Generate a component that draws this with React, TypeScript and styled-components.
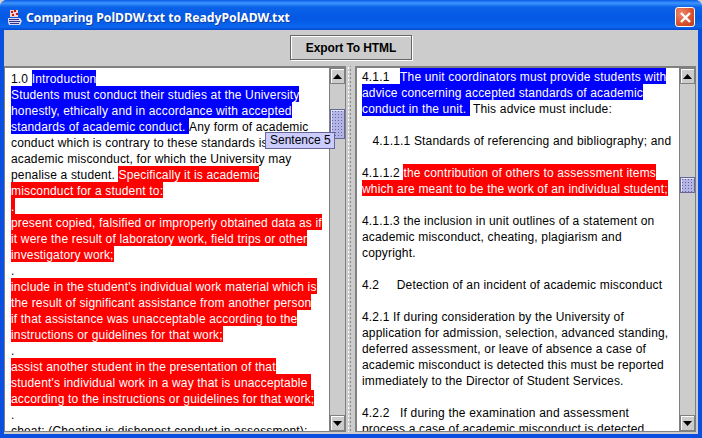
import React, { FC } from 'react'
import styled, { createGlobalStyle } from 'styled-components'

const GlobalStyle = createGlobalStyle`
  html, body {
    margin: 0;
    padding: 0;
    background: #cfcfcf;
  }
`

const Frame = styled.div`
  position: relative;
  width: 702px;
  height: 438px;
  display: flex;
  flex-direction: column;
  overflow: hidden;
  background: #0a4fe0;
  border-radius: 7px 7px 0 0;
`

const TitleBar = styled.div`
  height: 30px;
  flex: none;
  display: flex;
  align-items: center;
  padding: 4px 7px 0 7px;
  box-sizing: border-box;
  gap: 3px;
  background: linear-gradient(180deg, #0a58e6 0%, #3d95ff 10%, #0a62e8 24%, #0458e4 60%, #0a66ee 90%, #0548d0 100%);
`

const Title = styled.span`
  flex: 1;
  color: #fff;
  font: bold 12.2px 'Noto Sans', sans-serif;
  text-shadow: 1px 1px 0 #0a3fa8;
`

const CloseButton = styled.div`
  width: 20px;
  height: 20px;
  border: 1px solid #fff;
  border-radius: 3px;
  box-sizing: border-box;
  background: radial-gradient(circle at 30% 30%, #ee8a6e, #d8502c 60%, #b83a18);
  display: flex;
  align-items: center;
  justify-content: center;
`

const Body = styled.div`
  flex: 1;
  min-height: 0;
  margin: 0 4px 4px;
  background: #cccccc;
  display: flex;
  flex-direction: column;
`

const Toolbar = styled.div`
  height: 36px;
  flex: none;
  display: flex;
  justify-content: center;
  padding-top: 5px;
  box-sizing: border-box;
`

const ExportButton = styled.button`
  width: 122px;
  height: 25px;
  padding: 0;
  background: #cccccc;
  border: 1px solid #666666;
  box-shadow: inset 1px 1px 0 #ffffff, 1px 1px 0 #ffffff;
  color: #000;
  font: bold 12px 'Liberation Sans', sans-serif;
  letter-spacing: -0.1px;
`

const Split = styled.div`
  flex: 1;
  min-height: 0;
  display: flex;
  padding-bottom: 2px;
`

const Pane = styled.div<{ $width: number; $edge: number }>`
  width: ${p => p.$width}px;
  flex: none;
  display: flex;
  box-sizing: border-box;
  border: 1px solid #808080;
  border-top-width: 2px;
  border-left-width: ${p => p.$edge}px;
  background: #fff;
  overflow: hidden;
`

const Divider = styled.div`
  width: 9px;
  flex: none;
  background-color: #cccccc;
  background-image: radial-gradient(circle, #ffffff 0.8px, transparent 1px), radial-gradient(circle, #8a8a8a 0.8px, transparent 1px);
  background-repeat: repeat-y;
  background-position: 1px 0, 3px 2px;
  background-size: 3px 4px;
`

const TextArea = styled.div<{ $left: number; $top: number }>`
  flex: 1;
  min-width: 0;
  padding: ${p => p.$top}px 0 0 ${p => p.$left}px;
  overflow: hidden;
  font: 12px/19px 'Liberation Sans', sans-serif;
  letter-spacing: 0.17px;
  color: #000;
  white-space: pre;
`

const Line = styled.div`
  height: 16px;
`

const Mark = styled.span<{ $tone: 'blue' | 'red' }>`
  display: inline-block;
  height: 16px;
  background: ${p => (p.$tone === 'blue' ? '#0000ff' : '#ff0000')};
  color: #fff;
`

const ScrollTrack = styled.div`
  width: 15px;
  flex: none;
  display: flex;
  flex-direction: column;
  background: #cccccc;
  border-left: 1px solid #808080;
`

const ArrowButton = styled.div`
  height: 16px;
  flex: none;
  box-sizing: border-box;
  border: 1px solid #808080;
  box-shadow: inset 1px 1px 0 #fff;
  background: #cccccc;
  display: flex;
  align-items: center;
  justify-content: center;
`

const TrackSpace = styled.div<{ $top: number }>`
  flex: 1;
  padding-top: ${p => p.$top}px;
`

const Thumb = styled.div<{ $height: number }>`
  height: ${p => p.$height}px;
  box-sizing: border-box;
  border: 1px solid #666699;
  box-shadow: inset 1px 1px 0 #e4e4ff;
  background-color: #b4b4e6;
  background-image: radial-gradient(#666699 0.7px, transparent 0.9px);
  background-size: 3px 3px;
`

const Tip = styled.div`
  position: absolute;
  left: 265px;
  top: 132px;
  width: 70px;
  height: 17px;
  padding-left: 4px;
  box-sizing: border-box;
  background: #ccccff;
  border: 1px solid #666699;
  font: 12px/15px 'Liberation Sans', sans-serif;
  color: #000;
`

const Arrow: FC<{ up?: boolean }> = ({ up }) => (
  <svg width="9" height="5" viewBox="0 0 9 5">
    <path d={up ? 'M4.5 0 L9 5 L0 5 Z' : 'M0 0 L9 0 L4.5 5 Z'} fill="#000" />
  </svg>
)

const Scrollbar: FC<{ top: number; thumb: number }> = ({ top, thumb }) => (
  <ScrollTrack>
    <ArrowButton><Arrow up /></ArrowButton>
    <TrackSpace $top={top}>
      <Thumb $height={thumb} />
    </TrackSpace>
    <ArrowButton><Arrow /></ArrowButton>
  </ScrollTrack>
)

const AppIcon: FC = () => (
  <svg width="16" height="17" viewBox="0 0 16 17">
    <rect x="3" y="1" width="8" height="7" fill="#f4d0d0" />
    <path d="M4 2h2v2H4zM7 1h2v2H7zM9 4h2v2H9zM5 5h2v2H5z" fill="#c81818" />
    <path d="M1 9h12l2 3-2 4H2l-1-3z" fill="#d8d8f4" />
    <path d="M2 10.5h10M2 12.5h11M3 14.5h9" stroke="#30308a" strokeWidth="1" />
  </svg>
)

type Seg = { t: string; c?: 'blue' | 'red' }

const left: Seg[][] = [
  [{ t: '1.0 ' }, { t: 'Introduction', c: 'blue' }],
  [{ t: 'Students must conduct their studies at the University', c: 'blue' }],
  [{ t: 'honestly, ethically and in accordance with accepted', c: 'blue' }],
  [{ t: 'standards of academic conduct. ', c: 'blue' }, { t: 'Any form of academic' }],
  [{ t: 'conduct which is contrary to these standards is' }],
  [{ t: 'academic misconduct, for which the University may' }],
  [{ t: 'penalise a student. ' }, { t: 'Specifically it is academic', c: 'red' }],
  [{ t: 'misconduct for a student to:', c: 'red' }],
  [{ t: '.', c: 'red' }],
  [{ t: 'present copied, falsified or improperly obtained data as if', c: 'red' }],
  [{ t: 'it were the result of laboratory work, field trips or other', c: 'red' }],
  [{ t: 'investigatory work;', c: 'red' }],
  [{ t: '.' }],
  [{ t: "include in the student's individual work material which is", c: 'red' }],
  [{ t: 'the result of significant assistance from another person', c: 'red' }],
  [{ t: 'if that assistance was unacceptable according to the', c: 'red' }],
  [{ t: 'instructions or guidelines for that work;', c: 'red' }],
  [{ t: '.' }],
  [{ t: 'assist another student in the presentation of that', c: 'red' }],
  [{ t: "student's individual work in a way that is unacceptable ", c: 'red' }],
  [{ t: 'according to the instructions or guidelines for that work;', c: 'red' }],
  [{ t: '.' }],
  [{ t: 'cheat; (Cheating is dishonest conduct in assessment);' }],
]

const right: Seg[][] = [
  [{ t: '4.1.1   ' }, { t: 'The unit coordinators must provide students with', c: 'blue' }],
  [{ t: 'advice concerning accepted standards of academic', c: 'blue' }],
  [{ t: 'conduct in the unit. ', c: 'blue' }, { t: ' This advice must include:' }],
  [{ t: '' }],
  [{ t: '   4.1.1.1 Standards of referencing and bibliography; and' }],
  [{ t: '' }],
  [{ t: '4.1.1.2 ' }, { t: 'the contribution of others to assessment items', c: 'red' }],
  [{ t: 'which are meant to be the work of an individual student;', c: 'red' }],
  [{ t: '' }],
  [{ t: '4.1.1.3 the inclusion in unit outlines of a statement on' }],
  [{ t: 'academic misconduct, cheating, plagiarism and' }],
  [{ t: 'copyright.' }],
  [{ t: '' }],
  [{ t: '4.2     Detection of an incident of academic misconduct' }],
  [{ t: '' }],
  [{ t: '4.2.1 If during consideration by the University of' }],
  [{ t: 'application for admission, selection, advanced standing,' }],
  [{ t: 'deferred assessment, or leave of absence a case of' }],
  [{ t: 'academic misconduct is detected this must be reported' }],
  [{ t: 'immediately to the Director of Student Services.' }],
  [{ t: '' }],
  [{ t: '4.2.2   If during the examination and assessment' }],
  [{ t: 'process a case of academic misconduct is detected' }],
]

const Lines: FC<{ rows: Seg[][] }> = ({ rows }) => (
  <>
    {rows.map((row, i) => (
      <Line key={i}>
        {row.map((s, j) => (s.c ? <Mark key={j} $tone={s.c}>{s.t}</Mark> : <span key={j}>{s.t}</span>))}
      </Line>
    ))}
  </>
)

const App: FC = () => {
  return (
    <Frame>
      <GlobalStyle />
      <TitleBar>
        <AppIcon />
        <Title>Comparing PolDDW.txt to ReadyPolADW.txt</Title>
        <CloseButton>
          <svg width="13" height="13" viewBox="0 0 13 13">
            <path d="M2 2 L11 11 M11 2 L2 11" stroke="#fff" strokeWidth="2.4" />
          </svg>
        </CloseButton>
      </TitleBar>
      <Body>
        <Toolbar>
          <ExportButton>Export To HTML</ExportButton>
        </Toolbar>
        <Split>
          <Pane $width={342} $edge={1}>
            <TextArea $left={6} $top={2}><Lines rows={left} /></TextArea>
            <Scrollbar top={25} thumb={30} />
          </Pane>
          <Divider />
          <Pane $width={341} $edge={2}>
            <TextArea $left={5} $top={0}><Lines rows={right} /></TextArea>
            <Scrollbar top={93} thumb={16} />
          </Pane>
        </Split>
      </Body>
      <Tip>Sentence 5</Tip>
    </Frame>
  )
}

export default App
